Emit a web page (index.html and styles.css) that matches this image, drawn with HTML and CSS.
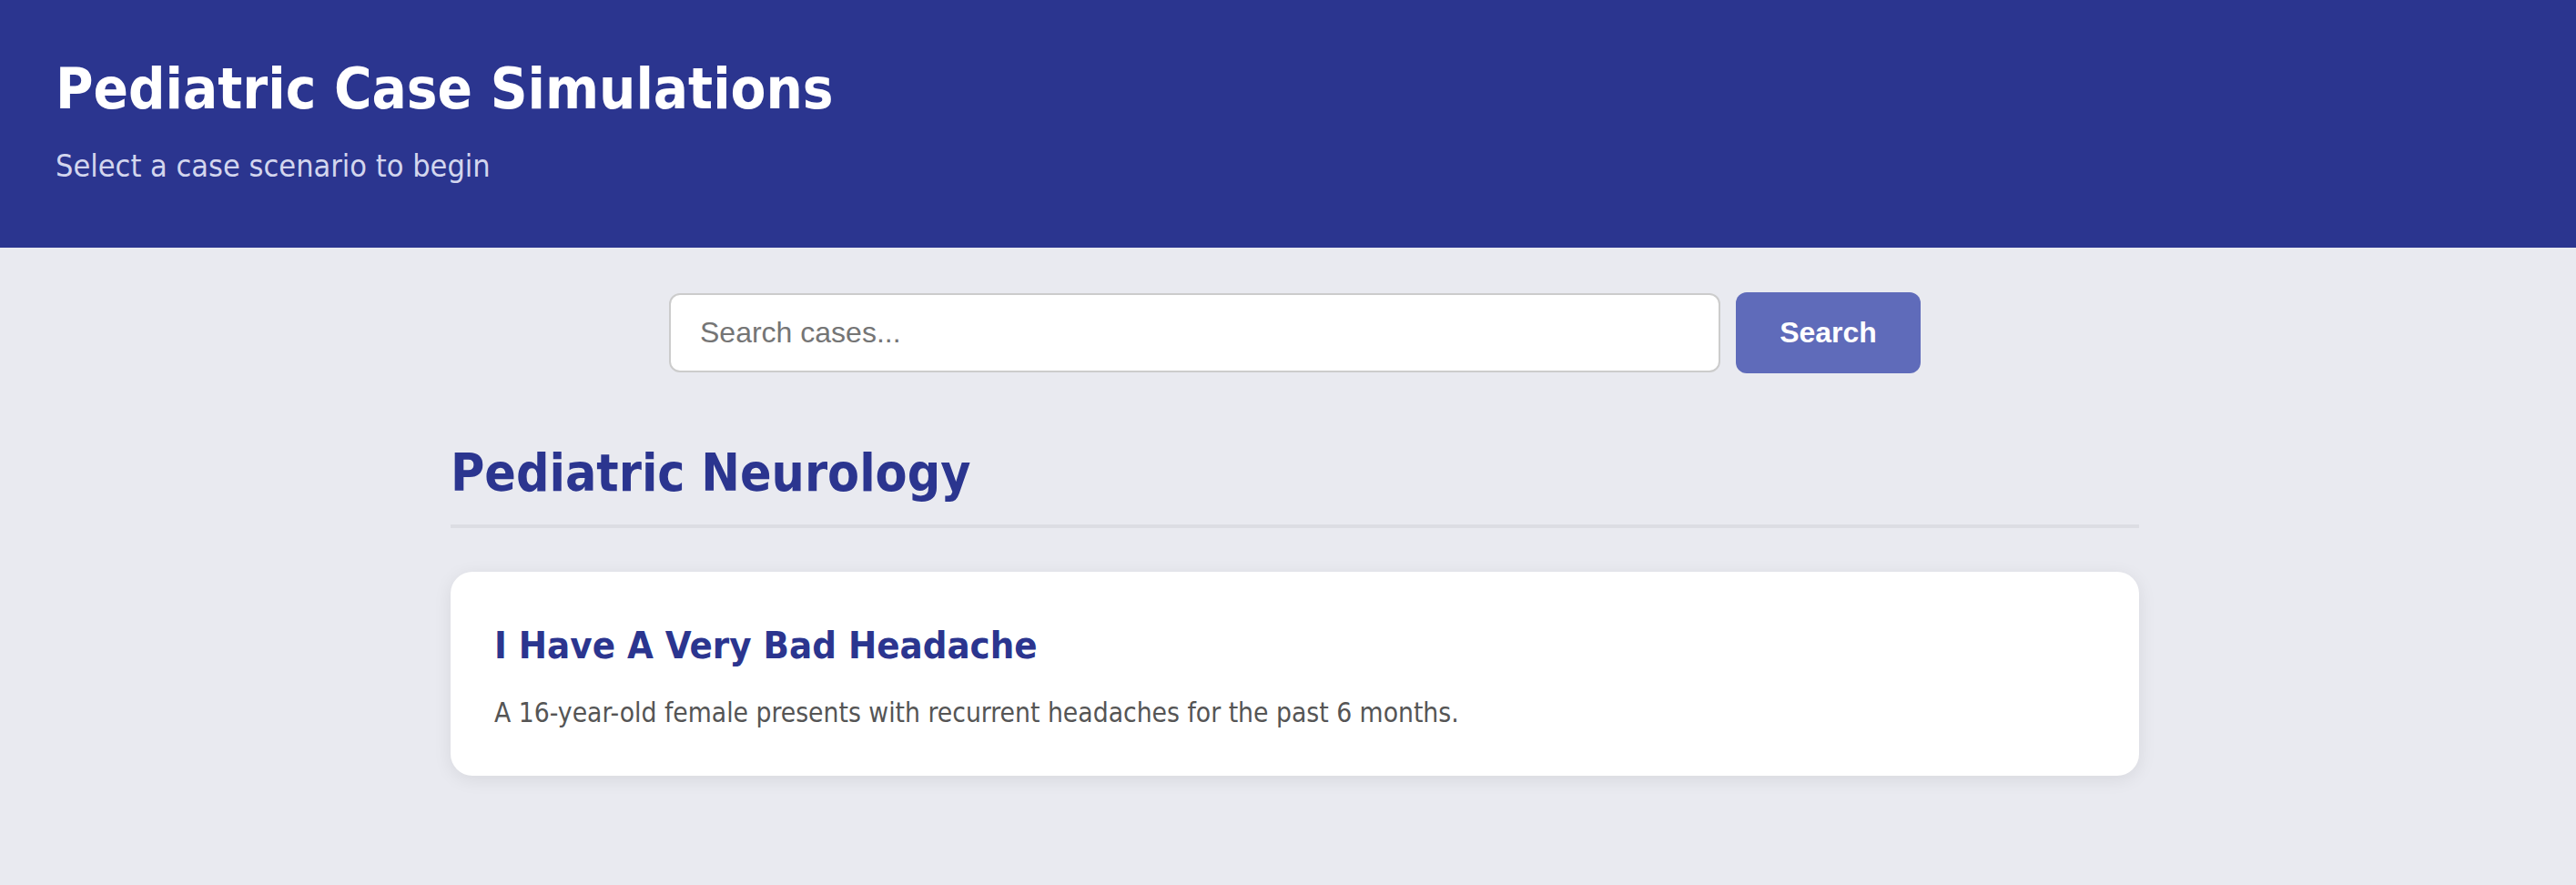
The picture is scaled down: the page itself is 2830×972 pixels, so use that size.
FILE: index.html
```html
<!DOCTYPE html>
<html lang="en">
<head>
<meta charset="utf-8">
<title>Pediatric Case Simulations</title>
<link rel="stylesheet" href="styles.css">
</head>
<body>
<header class="site-header">
  <h1 class="site-title">Pediatric Case Simulations</h1>
  <p class="site-subtitle">Select a case scenario to begin</p>
</header>
<main class="content">
  <form class="search-bar" onsubmit="return false;">
    <input class="search-input" type="text" placeholder="Search cases...">
    <button class="search-button" type="submit">Search</button>
  </form>
  <section class="category">
    <h2 class="category-title">Pediatric Neurology</h2>
    <div class="case-card">
      <h3 class="case-title">I Have A Very Bad Headache</h3>
      <p class="case-desc">A 16-year-old female presents with recurrent headaches for the past 6 months.</p>
    </div>
  </section>
</main>
</body>
</html>
```
FILE: styles.css
```css
html, body {
  margin: 0;
  padding: 0;
}
body {
  background: #e9eaf0;
  font-family: "DejaVu Sans Condensed", "DejaVu Sans", sans-serif;
  width: 2830px;
  min-height: 972px;
}
.site-header {
  background: #2b358f;
  color: #ffffff;
  padding: 60px 61px 71px;
}
.site-title {
  margin: 0;
  font-size: 63px;
  line-height: 76.8px;
  font-weight: bold;
}
.site-subtitle {
  margin: 26px 0 0;
  font-size: 34px;
  line-height: 38.4px;
  color: #d3d6ee;
}
.content {
  width: 1855px;
  margin: 0 0 0 495px;
  padding-top: 49px;
}
.search-bar {
  display: flex;
  align-items: center;
  gap: 17px;
  width: 1375px;
  margin: 0 auto;
}
.search-input {
  flex: 1;
  box-sizing: border-box;
  height: 87px;
  border: 2px solid #cccccc;
  border-radius: 12px;
  padding: 0 32px;
  font-family: "Liberation Sans", Arial, sans-serif;
  font-size: 32px;
  color: #333;
  background: #fff;
  outline: none;
}
.search-input::placeholder {
  color: #757575;
}
.search-button {
  box-sizing: border-box;
  width: 203px;
  height: 89px;
  border: none;
  border-radius: 12px;
  background: #5f6bba;
  color: #ffffff;
  font-family: "Liberation Sans", Arial, sans-serif;
  font-weight: bold;
  font-size: 32px;
}
.category {
  margin-top: 75px;
}
.category-title {
  margin: 0;
  font-size: 56.7px;
  line-height: 69.6px;
  font-weight: bold;
  color: #2b358f;
  padding: 0 0 21px;
  border-bottom: 4px solid #dcdde3;
}
.case-card {
  margin-top: 48px;
  background: #ffffff;
  border-radius: 24px;
  padding: 56px 48px 51px;
  box-shadow: 0 4px 20px rgba(0, 0, 0, 0.08);
}
.case-title {
  margin: 0;
  font-size: 41.5px;
  line-height: 50.4px;
  font-weight: bold;
  color: #2b358f;
}
.case-desc {
  margin: 31px 0 0;
  font-size: 29.7px;
  line-height: 36px;
  color: #555555;
}
```
